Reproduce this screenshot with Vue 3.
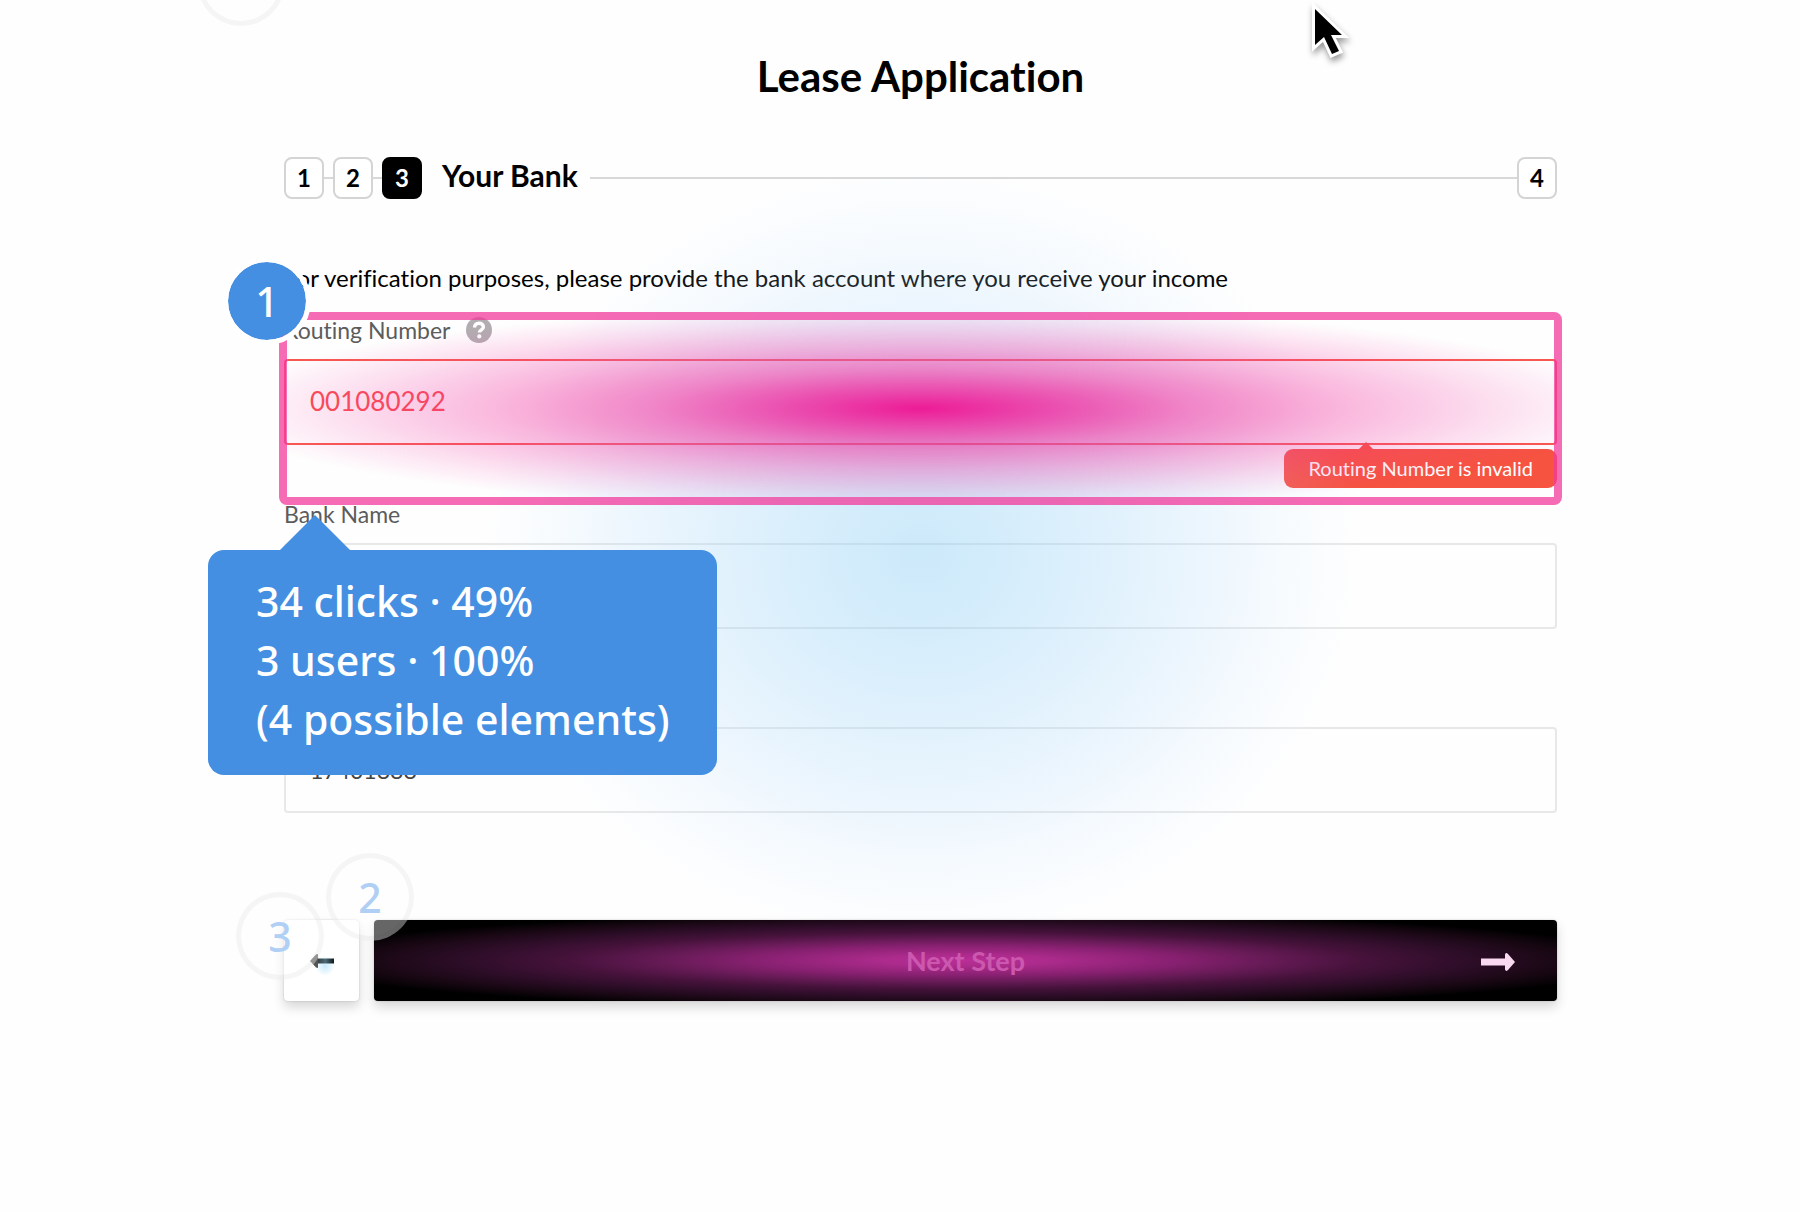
<script setup>
import { ref } from 'vue'

const routing = ref('001080292')
const bank = ref('')
const account = ref('17401888')
</script>

<template>
  <main class="page">
    <h1 class="title">Lease Application</h1>

    <header class="steps">
      <span class="step">1</span>
      <span class="link"></span>
      <span class="step">2</span>
      <span class="link"></span>
      <span class="step current">3</span>
      <h2 class="step-name">Your Bank</h2>
      <span class="rail"></span>
      <span class="step">4</span>
    </header>

    <form class="form" @submit.prevent>
      <p class="intro">For verification purposes, please provide the bank account where you receive your income</p>

      <div class="field">
        <div class="label-row">
          <label class="label" for="routing">Routing Number</label>
          <svg class="help" viewBox="0 0 26 26" aria-hidden="true">
            <circle cx="13" cy="13" r="13" fill="#b3adb1" />
            <path d="M8.6 10.4c0-2.6 1.8-4.2 4.4-4.2s4.4 1.5 4.4 3.7c0 3.1-4 2.9-4 5.7" fill="none" stroke="#fff" stroke-width="3.4" />
            <circle cx="13.3" cy="19.4" r="2.1" fill="#fff" />
          </svg>
        </div>
        <input id="routing" v-model="routing" class="input invalid" type="text" />
        <p class="error">Routing Number is invalid</p>
        <div class="hotspot"></div>
        <span class="pin pin-active">1</span>
        <div class="callout">
          <div>34 clicks · 49%</div>
          <div>3 users · 100%</div>
          <div>(4 possible elements)</div>
        </div>
      </div>

      <div class="field">
        <div class="label-row"><label class="label" for="bank">Bank Name</label></div>
        <input id="bank" v-model="bank" class="input" type="text" />
      </div>

      <div class="field">
        <div class="label-row"></div>
        <input v-model="account" class="input account" type="text" aria-label="Account number" />
      </div>

      <div class="haze"></div>

      <div class="actions">
        <button class="back" type="button" aria-label="Back">
          <svg width="24" height="14" viewBox="0 0 24 14" aria-hidden="true">
            <defs>
              <linearGradient id="shaft" x1="0" x2="1" y1="0" y2="0">
                <stop offset="0" stop-color="#333b3f" />
                <stop offset="0.5" stop-color="#4b6a78" />
                <stop offset="1" stop-color="#0d171b" />
              </linearGradient>
            </defs>
            <path d="M7 4.5h17v5H7z" fill="url(#shaft)" />
            <path d="M6 .6 8 0v14l-2-.6L0 7z" fill="#555" />
          </svg>
        </button>
        <button class="next" type="submit">
          Next Step
          <svg class="next-arrow" width="34" height="18" viewBox="0 0 34 18" aria-hidden="true">
            <path d="M0 5.5h24V1.5q1-2.5 3-.5l7 8-7 8q-2 2-3-.5v-4H0z" fill="#f8d9ef" />
          </svg>
        </button>
        <span class="pin ghost pin-two">2</span>
        <span class="pin ghost pin-three">3</span>
      </div>
    </form>

    <span class="pin ghost pin-top"></span>
    <svg class="cursor" viewBox="0 0 44 64" aria-hidden="true">
      <path d="M8 8v36l9-8 8 17 7-3-8-16h11z" fill="#000" stroke="#fff" stroke-width="6" paint-order="stroke" />
    </svg>
  </main>
</template>

<style>
body {
  margin: 0;
  background: #fefefe;
}
</style>

<style scoped>
.page {
  position: relative;
  box-sizing: border-box;
  min-height: 100vh;
  padding: 52px 243px 0 284px;
  overflow: hidden;
  font-family: Lato, "Liberation Sans", sans-serif;
  font-variant-ligatures: none;
  color: #000;
}

.title {
  margin: 0 0 57px;
  font-size: 42px;
  line-height: 48px;
  font-weight: 700;
  text-align: center;
}

.steps {
  display: flex;
  align-items: center;
}

.step {
  box-sizing: border-box;
  width: 40px;
  height: 42px;
  border: 2px solid #d4d4d4;
  border-radius: 8px;
  background: #fff;
  font-size: 24px;
  line-height: 38px;
  font-weight: 700;
  text-align: center;
}

.current {
  border-color: #000;
  background: #000;
  color: #fff;
}

.link {
  width: 9px;
  height: 2px;
  background: #d8d8d8;
}

.step-name {
  margin: 0 12px 6px 20px;
  font-size: 30px;
  line-height: 36px;
  font-weight: 700;
}

.rail {
  flex: 1;
  height: 2px;
  background: #d8d8d8;
}

.form {
  position: relative;
  margin-top: 64px;
}

.intro {
  margin: 0 0 22px;
  font-size: 24px;
  line-height: 30px;
}

.field {
  position: relative;
  height: 184px;
}

.label-row {
  display: flex;
  align-items: center;
  gap: 16px;
  height: 44px;
  box-sizing: border-box;
  padding-bottom: 14px;
}

.label {
  font-size: 23px;
  line-height: 30px;
  color: #5c5c5c;
}

.help {
  width: 26px;
  height: 26px;
}

.input {
  display: block;
  box-sizing: border-box;
  width: 100%;
  height: 86px;
  padding: 0 24px 2px;
  border: 2px solid #e8e8e8;
  border-radius: 4px;
  background: transparent;
  font: inherit;
  font-size: 26px;
  color: #444;
  outline: none;
}

.account {
  padding-bottom: 0;
  font-size: 23px;
}

.invalid {
  border-color: #f7594f;
  color: #f94d50;
}

.error {
  position: absolute;
  top: 134px;
  right: 0;
  margin: 0;
  padding: 0 24px;
  border-radius: 9px;
  background: #f65340;
  font-size: 20px;
  line-height: 39px;
  color: #fff;
}

.error::before {
  content: "";
  position: absolute;
  top: -7px;
  left: 74px;
  border: 8px solid transparent;
  border-top: 0;
  border-bottom-color: #f65340;
}

.hotspot {
  position: absolute;
  z-index: 1;
  inset: -3px -5px -6px;
  border: 8px solid rgba(242, 58, 155, 0.75);
  border-radius: 8px;
  background: radial-gradient(56% 58% at 50% 50%, rgba(237, 20, 147, 0.97) 0%, rgba(237, 26, 150, 0.77) 18%, rgba(240, 40, 155, 0.55) 38%, rgba(243, 50, 160, 0.34) 60%, rgba(245, 60, 165, 0.15) 82%, rgba(245, 60, 165, 0) 100%) padding-box;
  pointer-events: none;
}

.haze {
  position: absolute;
  top: -98px;
  left: calc(50% - 440px);
  width: 880px;
  height: 780px;
  background: radial-gradient(50% 50% at 50% 50%, rgba(135, 205, 244, 0.42) 0%, rgba(150, 210, 248, 0.33) 35%, rgba(170, 216, 252, 0.23) 62%, rgba(190, 226, 255, 0.1) 84%, rgba(200, 232, 255, 0) 100%);
  pointer-events: none;
}

.pin {
  position: absolute;
  z-index: 3;
  box-sizing: border-box;
  width: 88px;
  height: 88px;
  border: 5px solid #fff;
  border-radius: 50%;
  font-family: "Noto Sans", "Open Sans", sans-serif;
  font-size: 41px;
  line-height: 78px;
  font-weight: 500;
  text-align: center;
}

.pin-active {
  top: -58px;
  left: -61px;
  background: #448fe2;
  background-clip: padding-box;
  color: #fff;
}

.ghost {
  border-color: rgba(20, 20, 60, 0.04);
  background: rgba(255, 255, 255, 0.4);
  color: #b0cff5;
}

.pin-two {
  top: -58px;
  left: 42px;
}

.pin-three {
  top: -19px;
  left: -48px;
}

.pin-top {
  top: -62px;
  left: 197px;
}

.callout {
  position: absolute;
  z-index: 2;
  top: 235px;
  left: -76px;
  padding: 22px 47px 26px 48px;
  border-radius: 16px;
  background: #448fe2;
  font-family: "Noto Sans", "Open Sans", sans-serif;
  font-size: 41px;
  line-height: 59px;
  font-weight: 500;
  color: #fff;
  white-space: nowrap;
}

.callout::before {
  content: "";
  position: absolute;
  top: -35px;
  left: 71px;
  border: 36px solid transparent;
  border-top: 0;
  border-bottom-color: #448fe2;
}

.actions {
  position: relative;
  display: flex;
  gap: 15px;
  margin-top: 44px;
  padding-top: 9px;
}

.back,
.next {
  height: 81px;
  padding: 0;
  border: 0;
  border-radius: 4px;
  box-shadow: 0 6px 12px rgba(0, 0, 0, 0.16), 0 0 2px rgba(0, 0, 0, 0.2);
  font: inherit;
}

.back {
  display: flex;
  align-items: center;
  justify-content: center;
  width: 75px;
  background: radial-gradient(circle at 41px 46px, rgba(150, 215, 250, 0.55), rgba(150, 215, 250, 0) 10px) #fff;
}

.next {
  position: relative;
  flex: 1;
  background: radial-gradient(58% 60% at 50% 50%, #b92e97 0%, #ac2b8c 12%, #872070 31%, #641a54 45%, #46123b 58%, #2c0d27 74%, #170712 88%, #000 100%) #000;
  font-size: 27px;
  font-weight: 700;
  color: #cb58ae;
}

.next-arrow {
  position: absolute;
  top: 33px;
  right: 42px;
}

.cursor {
  position: absolute;
  top: 1px;
  left: 1307px;
  width: 44px;
  height: 64px;
  overflow: visible;
  filter: drop-shadow(1px 4px 3px rgba(0, 0, 0, 0.4));
}
</style>
